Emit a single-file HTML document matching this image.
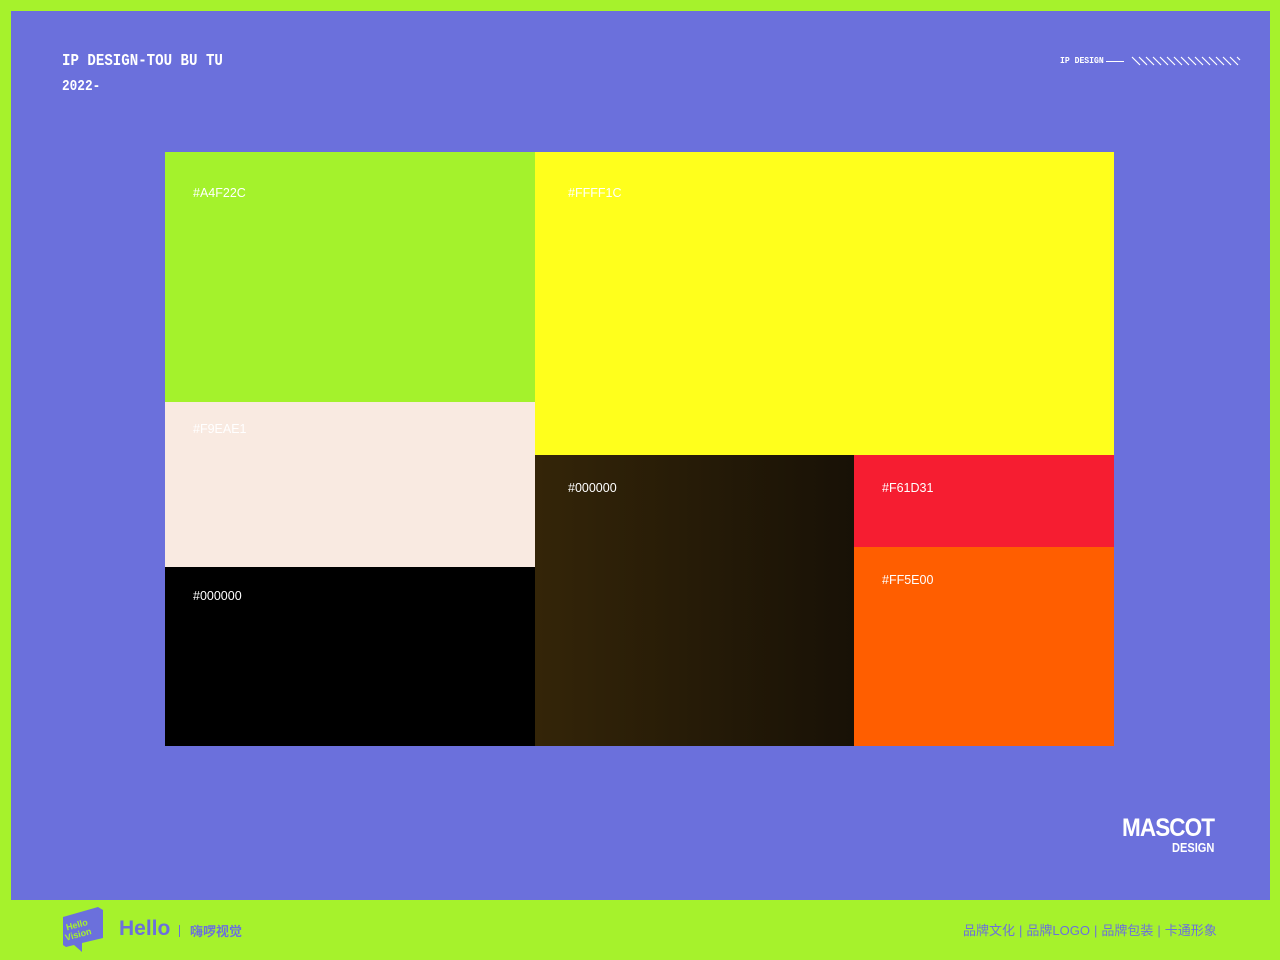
<!DOCTYPE html>
<html><head><meta charset="utf-8"><style>
*{margin:0;padding:0;box-sizing:border-box}
body{width:1280px;height:960px;background:#a6f22c;position:relative;overflow:hidden;font-family:"Liberation Sans","Noto Sans CJK SC",sans-serif}
.main{position:absolute;left:11px;top:11px;width:1259px;height:889px;background:#6b70dc}
.b{position:absolute}
.l{position:absolute;font-size:12.5px;color:#fff}
.mono{font-family:"Liberation Mono","DejaVu Sans Mono",monospace;font-weight:bold;color:#fff;position:absolute;transform-origin:0 0}
</style></head><body>
<div class="main"></div>
<div class="mono" style="left:62px;top:52px;font-size:17px;transform:scaleX(0.83)">IP DESIGN-TOU BU TU</div>
<div class="mono" style="left:62px;top:78px;font-size:15px;transform:scaleX(0.85)">2022-</div>
<div class="mono" style="left:1060px;top:56px;font-size:9px;transform:scaleX(0.9)">IP DESIGN</div>
<div class="b" style="left:1106px;top:61px;width:18px;height:1px;background:#fff"></div>
<svg class="b" style="left:1130px;top:56px" width="112" height="11"><g stroke="#fff" stroke-width="1.2">
<path d="M2 1l8 8M9 1l8 8M16 1l8 8M23 1l8 8M30 1l8 8M37 1l8 8M44 1l8 8M51 1l8 8M58 1l8 8M65 1l8 8M72 1l8 8M79 1l8 8M86 1l8 8M93 1l8 8M100 1l8 8M107 1l3 3"/></g></svg>

<div class="b" style="left:165px;top:152px;width:370px;height:250px;background:#a4f22c"></div>
<div class="b" style="left:165px;top:402px;width:370px;height:165px;background:#f9eae1"></div>
<div class="b" style="left:165px;top:567px;width:370px;height:179px;background:#000"></div>
<div class="b" style="left:535px;top:152px;width:579px;height:303px;background:#ffff1c"></div>
<div class="b" style="left:535px;top:455px;width:319px;height:291px;background:linear-gradient(90deg,#342508,#181106)"></div>
<div class="b" style="left:854px;top:455px;width:260px;height:92px;background:#f61d31"></div>
<div class="b" style="left:854px;top:547px;width:260px;height:199px;background:#ff5e00"></div>
<div class="l" style="left:193px;top:186px">#A4F22C</div>
<div class="l" style="left:568px;top:186px">#FFFF1C</div>
<div class="l" style="left:193px;top:422px">#F9EAE1</div>
<div class="l" style="left:568px;top:481px">#000000</div>
<div class="l" style="left:882px;top:481px">#F61D31</div>
<div class="l" style="left:882px;top:573px">#FF5E00</div>
<div class="l" style="left:193px;top:589px">#000000</div>

<div class="b" style="left:1122px;top:814px;color:#fff;font-weight:bold;font-size:25px;letter-spacing:-1px;transform:scaleX(0.9);transform-origin:0 0">MASCOT</div>
<div class="b" style="left:1172px;top:840px;color:#fff;font-weight:bold;font-size:13px;transform:scaleX(0.85);transform-origin:0 0">DESIGN</div>

<svg class="b" style="left:60px;top:905px" width="46" height="50"><path d="M3 12L38 2 43 5 43 33 22 38 22 47 14 40 6 42 3 40Z" fill="#6b70dc"/><text x="6" y="22" font-size="9" font-weight="bold" fill="#a6f22c" transform="rotate(-15 20 20)">Hello</text><text x="5" y="32" font-size="9" font-weight="bold" fill="#a6f22c" transform="rotate(-15 20 30)">Vision</text></svg>
<div class="b" style="left:119px;top:917px;color:#6b70dc;font-weight:bold;font-size:21px">Hello</div>
<div class="b" style="left:179px;top:925px;width:1px;height:12px;background:#6b70dc"></div>
<div class="b" style="left:190px;top:921px;color:#6b70dc;font-weight:bold;font-size:13px">嗨啰视觉</div>
<div class="b" style="left:963px;top:920px;color:#6b70dc;font-size:13px">品牌文化<span style="margin:0 4px">|</span>品牌LOGO<span style="margin:0 4px">|</span>品牌包装<span style="margin:0 4px">|</span>卡通形象</div>
</body></html>
